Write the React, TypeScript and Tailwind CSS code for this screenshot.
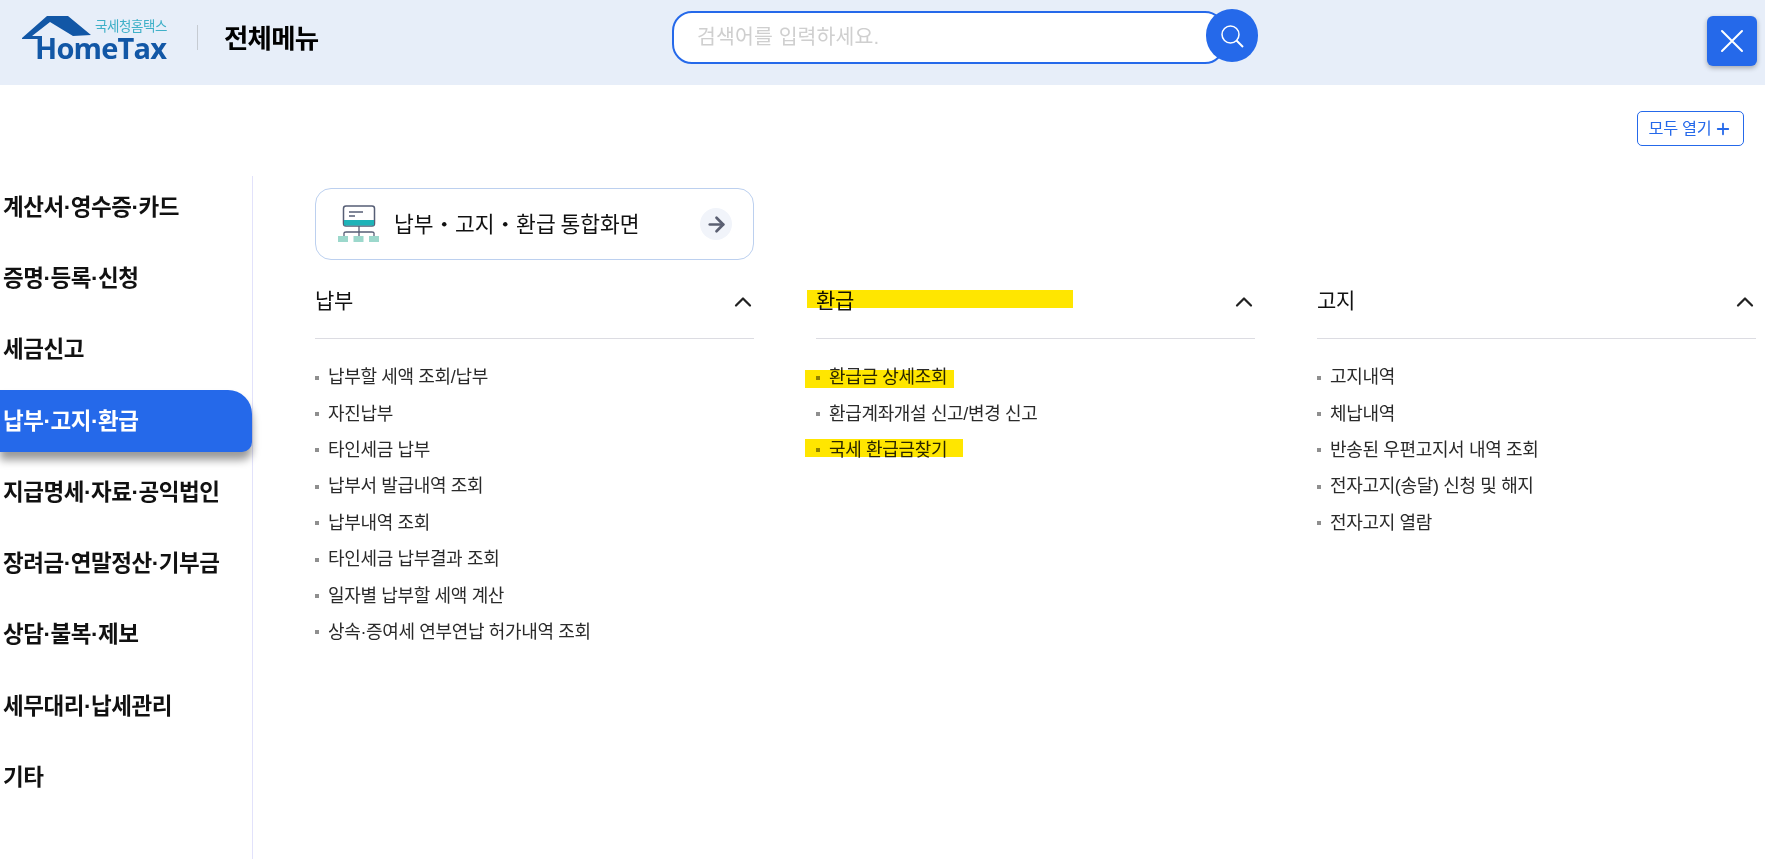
import React from "react";
import { ChevronUp, Plus, ArrowRight } from "lucide-react";

const font = "font-['Liberation_Sans','Noto_Sans_CJK_KR',sans-serif]";

const side = ["계산서·영수증·카드", "증명·등록·신청", "세금신고", "납부·고지·환급", "지급명세·자료·공익법인", "장려금·연말정산·기부금", "상담·불복·제보", "세무대리·납세관리", "기타"];

const cols = [
  { title: "납부", items: ["납부할 세액 조회/납부", "자진납부", "타인세금 납부", "납부서 발급내역 조회", "납부내역 조회", "타인세금 납부결과 조회", "일자별 납부할 세액 계산", "상속·증여세 연부연납 허가내역 조회"] },
  { title: "환급", items: ["환급금 상세조회", "환급계좌개설 신고/변경 신고", "국세 환급금찾기"] },
  { title: "고지", items: ["고지내역", "체납내역", "반송된 우편고지서 내역 조회", "전자고지(송달) 신청 및 해지", "전자고지 열람"] },
];

function Logo() {
  return (
    <div className="relative w-[146px] h-[46px]">
      <svg className="absolute left-0 top-0" width="72" height="30" viewBox="0 0 72 30">
        <path d="M0 23 L25 1 L46 1 L69 20 L51 21 L28 7 L10 21 L20 21 L20 24 L0 24 Z" fill="#1257a6" />
      </svg>
      <span className="absolute left-[73px] top-[5px] text-[13.5px] leading-[14px] text-[#3fb0c8] whitespace-nowrap tracking-[-0.4px]">국세청홈택스</span>
      <span className="absolute left-[13px] top-[21px] text-[29px] leading-[24px] font-bold text-[#1257a6] whitespace-nowrap font-['Open_Sans',sans-serif] tracking-[-0.8px]">HomeTax</span>
    </div>
  );
}

function Header() {
  return (
    <header className="relative h-[85px] bg-[#e7eef9] flex items-start">
      <div className="ml-[22px] mt-[15px]"><Logo /></div>
      <div className="ml-[29px] mt-[25px] w-px h-[25px] bg-[#c6cbd2]" />
      <div className="ml-[26px] mt-[19px] text-[26.5px] leading-[40px] font-bold text-black tracking-[-0.8px]">전체메뉴</div>
      <div className="absolute left-[672px] top-[11px] w-[553px] h-[53px] rounded-[20px] border-2 border-[#2569ea] bg-white flex items-center pl-[23px]">
        <span className="text-[20.5px] text-[#cfcfcf] tracking-[0.1px]">검색어를 입력하세요.</span>
      </div>
      <button className="absolute left-[1206px] top-[9px] w-[52px] h-[53px] rounded-full bg-[#2569ea] flex items-center justify-center">
        <svg width="26" height="26" viewBox="0 0 26 26" fill="none" stroke="#fff">
          <circle cx="11.5" cy="11.5" r="8.5" strokeWidth="1.5" />
          <path d="M17.5 17.5 L24 24" strokeWidth="2" />
        </svg>
      </button>
      <button className="absolute left-[1707px] top-[16px] w-[50px] h-[50px] rounded-[6px] bg-[#2569ea] shadow-[0_2px_5px_rgba(0,0,0,0.3)] flex items-center justify-center">
        <svg width="24" height="24" viewBox="0 0 24 24" stroke="#fff" strokeWidth="2" strokeLinecap="round">
          <path d="M2 2 L22 22 M22 2 L2 22" />
        </svg>
      </button>
    </header>
  );
}

function Sidebar() {
  return (
    <nav className="w-[253px] shrink-0 border-r border-[#e2e2fb] min-h-[684px]">
      {side.map((s, i) => (
        <div key={s} className={"h-[62px] mb-[9.25px] flex items-center pl-[3px] pt-[1.5px] text-[22.5px] font-bold tracking-[-0.45px] whitespace-nowrap " + (i === 3 ? "bg-[#2569ea] text-white rounded-tr-[24px] rounded-br-[10px] shadow-[0_8px_8px_rgba(0,0,0,0.4)]" : "text-[#111]")}>
          {s}
        </div>
      ))}
    </nav>
  );
}

function Column({ title, items }: { title: string; items: string[] }) {
  return (
    <section className="w-[439px] shrink-0">
      <div className="h-[79px] border-b border-[#dcdce2] flex justify-between pt-[27px]">
        <span className="text-[21px] leading-[28px] text-[#111] tracking-[-0.3px]">{title}</span>
        <ChevronUp size={28} strokeWidth={1.9} className="text-[#222] mt-[1px] mr-[-3px]" />
      </div>
      <ul className="pt-[20.5px]">
        {items.map((it) => (
          <li key={it} className="h-[36.4px] flex items-center text-[18px] text-[#2a2a2a] tracking-[-0.35px] whitespace-nowrap">
            <span className="w-[4px] h-[4px] bg-[#8f8f8f] mr-[9px] shrink-0" />
            {it}
          </li>
        ))}
      </ul>
    </section>
  );
}

export default function App() {
  return (
    <div className={"relative w-[1765px] h-[859px] bg-white overflow-hidden " + font}>
      <Header />
      <div className="h-[91px] relative">
        <button className="absolute left-[1637px] top-[26px] w-[107px] h-[35px] rounded-[5px] border border-[#2569ea] flex items-center justify-center gap-[3px] text-[16.3px] text-[#2569ea] tracking-[-0.3px]">
          모두 열기<Plus size={18} strokeWidth={2.4} />
        </button>
      </div>
      <div className="flex">
        <Sidebar />
        <main className="pl-[62px] pt-[12px]">
          <div className="w-[439px] h-[72px] rounded-[16px] border border-[#bcd0ef] flex items-center pl-[22px] pr-[21px]">
            <svg width="42" height="38" viewBox="0 0 42 38" className="shrink-0">
              <rect x="5.5" y="1" width="31" height="20" rx="2.5" fill="#fff" stroke="#565e75" strokeWidth="1.5" />
              <rect x="6" y="15" width="30" height="5.5" fill="#1eb3b8" />
              <path d="M11 7 H25 M11 11 H17" stroke="#565e75" strokeWidth="1.3" />
              <path d="M21 21 V32 M6 32 V28 Q6 27 8 27 H34 Q36 27 36 28 V32" stroke="#565e75" strokeWidth="1.3" fill="none" />
              <rect x="0" y="31" width="10" height="6" fill="#9cd8cc" />
              <rect x="15.5" y="31" width="10" height="6" fill="#9cd8cc" />
              <rect x="31" y="31" width="10" height="6" fill="#9cd8cc" />
            </svg>
            <span className="ml-[14px] pb-[2px] text-[21.5px] text-[#111] flex-1 whitespace-nowrap font-['Noto_Sans_CJK_KR',sans-serif]">납부・고지・환급 통합화면</span>
            <span className="w-[32px] h-[32px] rounded-full bg-[#f1f4fa] flex items-center justify-center">
              <ArrowRight size={23} strokeWidth={2.8} className="text-[#5b6072]" />
            </span>
          </div>
          <div className="flex gap-[62px]">
            {cols.map((c) => <Column key={c.title} {...c} />)}
          </div>
        </main>
      </div>
      <div className="absolute left-[807px] top-[290px] w-[266px] h-[18px] bg-[#ffe600] mix-blend-multiply" />
      <div className="absolute left-[805px] top-[370px] w-[149px] h-[18px] bg-[#ffe600] mix-blend-multiply" />
      <div className="absolute left-[805px] top-[439px] w-[158px] h-[18px] bg-[#ffe600] mix-blend-multiply" />
    </div>
  );
}
